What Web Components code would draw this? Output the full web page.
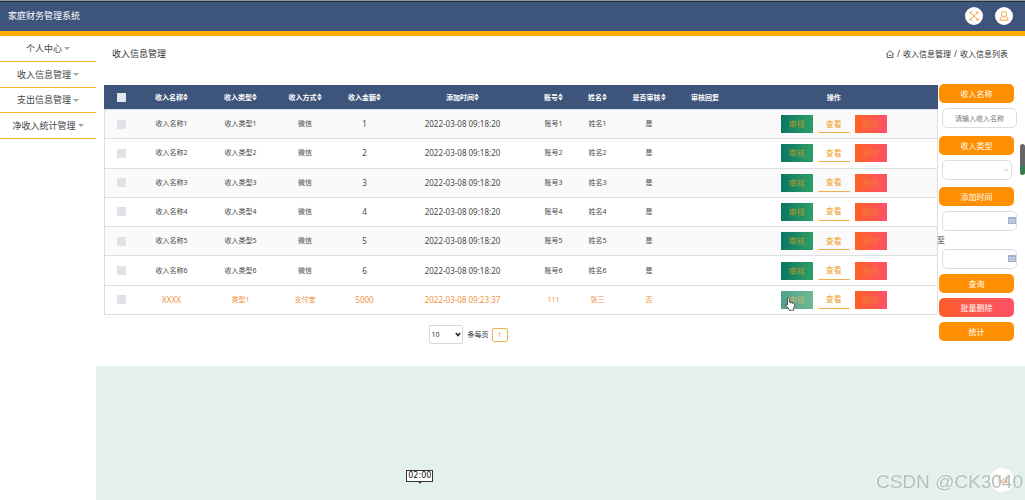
<!DOCTYPE html>
<html lang="zh-CN">
<head>
<meta charset="utf-8">
<title>家庭财务管理系统</title>
<style>
  html, body { margin: 0; }
  body {
    font-family: "Noto Sans", "Noto Sans CJK SC", sans-serif;
    font-size: 8px;
    color: #333;
    background: #fff;
    --blue: #3e557b;
    --orange: #ff8f00;
    --amber: #ffab03;
    --line: #dcdfe2;
  }
</style>
</head>
<body>
<finance-app></finance-app>
<script>
class BaseElement extends HTMLElement {
  render(html) {
    const t = document.createElement('template');
    t.innerHTML = '<style>*{box-sizing:border-box}button,input,select{font-family:inherit;margin:0}</style>' + html;
    const root = this.attachShadow({ mode: 'open' });
    root.appendChild(t.content.cloneNode(true));
    return root;
  }
}

customElements.define('app-header', class extends BaseElement {
  connectedCallback() {
    this.render(`
      <style>
        :host { display: flex; align-items: center; justify-content: space-between; box-sizing: border-box;
          height: 36px; padding: 0 12px 0 8px; background: var(--blue); color: #fff;
          border-top: 1px solid #8d979c; border-bottom: 5px solid var(--amber); box-shadow: inset 0 1px #252f40; }
        h1 { margin: 0; font-size: 9px; line-height: 14px; font-weight: 400; }
        nav { display: flex; gap: 12px; }
        button { display: grid; place-items: center; width: 18px; height: 18px; padding: 0; border: 0; border-radius: 50%; background: #fff; }
        svg { width: 12px; height: 12px; fill: none; stroke: #f5a84c; stroke-width: 1; }
      </style>
      <h1>家庭财务管理系统</h1>
      <nav>
        <button aria-label="全屏"><svg viewBox="0 0 12 12"><path d="M2 4V2h2M8 2h2v2M10 8v2H8M4 10H2V8M2 2l8 8M10 2l-8 8"/></svg></button>
        <button aria-label="用户"><svg viewBox="0 0 12 12"><circle cx="6" cy="4" r="2.6"/><path d="M4.5 6.3C2.6 7 2 8.400 2 10.200h8C10 8.400 9.400 7 7.500 6.300"/></svg></button>
      </nav>`);
  }
});

customElements.define('side-menu', class extends BaseElement {
  connectedCallback() {
    const items = ['个人中心', '收入信息管理', '支出信息管理', '净收入统计管理'];
    this.render(`
      <style>
        :host { display: block; flex: none; width: 96px; background: #fff; }
        ul { display: grid; grid-template-rows: 26px 26px 25px 26px; margin: 0; padding: 0; list-style: none; }
        li { display: grid; border-bottom: 1px solid #f8b632; }
        a { display: flex; align-items: center; justify-content: center; gap: 2px; color: #444; font-size: 9px; line-height: 12px; text-decoration: none; }
        i { border: solid transparent; border-width: 3px 3px 0; border-top-color: #a5a5a5; }
      </style>
      <ul>${items.map(t => `<li><a href="#">${t}<i></i></a></li>`).join('')}</ul>`);
  }
});

customElements.define('page-title', class extends BaseElement {
  connectedCallback() {
    this.render(`
      <style>
        :host { display: flex; align-items: center; justify-content: space-between; height: 35px; padding: 0 17px 0 16px; }
        h2 { margin: 0; font-size: 9px; line-height: 14px; font-weight: 400; }
        nav { display: flex; align-items: center; gap: 3px; line-height: 12px; }
        a { display: flex; color: inherit; text-decoration: none; }
        svg { width: 8px; height: 8px; fill: none; stroke: #333; }
      </style>
      <h2>收入信息管理</h2>
      <nav>
        <a href="#" aria-label="首页"><svg viewBox="0 0 8 8"><path d="M.3 4.200L4 .6 7.700 4.200M1.200 3.500v4h5.600v-4M2.800 5.500h2.400" stroke-width=".8"/></svg></a>
        <span>/</span><a href="#">收入信息管理</a><span>/</span><span>收入信息列表</span>
      </nav>`);
  }
});

customElements.define('row-actions', class extends BaseElement {
  connectedCallback() {
    this.render(`
      <style>
        :host { display: flex; justify-content: center; gap: 5px; position: relative; }
        button { width: 32px; height: 18px; padding: 0; border: 0; font-size: 8px; line-height: 16px; color: #f1a02c; }
        .audit { background: linear-gradient(90deg, #0b7664, #2e9f66); color: #b89a2c; }
        .view { background: none; border-bottom: 1px solid #efae52; }
        .del { background: linear-gradient(90deg, #ff6126, #ff5068); color: #f47c34; }
        :host([hovered]) .audit { opacity: .7; }
        svg { display: none; position: absolute; left: 50%; top: 6px; margin-left: -49px; width: 10px; height: 14px; }
        :host([hovered]) svg { display: block; }
      </style>
      <button class="audit">审核</button><button class="view">查看</button><button class="del">删除</button>
      <svg viewBox="0 0 10 14"><path d="M2.500 8V1.500c0-1.300 1.800-1.300 1.800 0V5l4 .8c.8.2 1.200.7 1.200 1.500 0 2-.3 3-1 4.200V13.300H4V12L.8 8.200C.2 7.300 1.300 6.500 2.500 8zM5.500 6.500V5.300M7.500 6.800V5.700" fill="#fff" stroke="#222" stroke-width=".7"/></svg>`);
  }
});

customElements.define('income-table', class extends BaseElement {
  connectedCallback() {
    const widths = [33, 68, 70, 59, 60, 136, 46, 42, 61, 51, 207];
    const heads = ['收入名称', '收入类型', '收入方式', '收入金额', '添加时间', '账号', '姓名', '是否审核'];
    const rows = [1, 2, 3, 4, 5, 6].map(n => ['收入名称' + n, '收入类型' + n, '微信', n, '2022-03-08 09:18:20', '账号' + n, '姓名' + n, '是', '']);
    rows.push(['XXXX', '类型1', '支付宝', '5000', '2022-03-08 09:23:37', '111', '张三', '否', '']);
    const sort = '<svg viewBox="0 0 5 8"><path d="M0 3.500L2.500.5 5 3.500zM0 4.500L2.500 7.500 5 4.500z"/></svg>';
    this.render(`
      <style>
        :host { display: block; }
        table { width: 100%; height: 230px; table-layout: fixed; border-collapse: collapse; border: 1px solid var(--line); text-align: center; font-size: 7px; line-height: 12px; }
        th, td { padding: 0; white-space: nowrap; }
        th { height: 24px; background: var(--blue); color: #fff; font-weight: 700; }
        thead { border: 1px solid var(--blue); }
        td { border-top: 1px solid var(--line); }
        tbody { color: #484848; }
        tbody tr:nth-child(odd) { background: #fafafa; }
        tbody tr:last-child { background: #fff; color: #f0923c; }
        .num { font-size: 8px; }
        th svg { width: 5px; height: 8px; fill: #fff; vertical-align: -1px; }
        input { appearance: none; display: block; width: 9px; height: 9px; margin: 0 auto; background: #dfe2e6; }
        th input { background: #e4e8ee; }
      </style>
      <table>
        <colgroup>${widths.map(w => `<col style="width:${w}px">`).join('')}</colgroup>
        <thead><tr><th><input type="checkbox" aria-label="全选"></th>${heads.map(h => `<th>${h}${sort}</th>`).join('')}<th>审核回复</th><th>操作</th></tr></thead>
        <tbody>${rows.map((r, i) => `<tr><td><input type="checkbox" aria-label="选择 ${r[0]}"></td>${r.map((c, j) =>
          `<td${j === 3 || j === 4 || c === 'XXXX' ? ' class="num"' : ''}>${c}</td>`).join('')}<td><row-actions${i === 6 ? ' hovered' : ''}></row-actions></td></tr>`).join('')}</tbody>
      </table>`);
  }
});

customElements.define('table-pager', class extends BaseElement {
  connectedCallback() {
    this.render(`
      <style>
        :host { display: flex; justify-content: center; align-items: center; padding: 10px 0 22px; margin-right: 105px; font-size: 7px; line-height: 12px; }
        label { display: flex; align-items: center; gap: 5px; }
        .box { position: relative; }
        select { display: block; appearance: none; width: 34px; height: 19px; padding: 0 2px; border: 1px solid #d5d8dc; border-radius: 2px; background: #fff; color: #333; font-size: 7px; }
        svg { position: absolute; right: 2px; top: 7px; width: 6px; height: 5px; fill: none; stroke: #222; stroke-width: 1.5; pointer-events: none; }
        button { width: 16px; height: 14px; margin-left: 3px; padding: 0; border: 1px solid #eab253; border-radius: 2px; background: #fff; color: #eda044; font-size: 7px; line-height: 12px; }
      </style>
      <label><span class="box"><select><option>10</option></select><svg viewBox="0 0 6 5"><path d="M.8 1L3 3.500 5.200 1"/></svg></span>条每页</label><button>1</button>`);
  }
});

customElements.define('search-panel', class extends BaseElement {
  connectedCallback() {
    const cal = '<svg class="cal" viewBox="0 0 8 7"><path d="M0 0h8v7H0z" fill="#9fb1cc"/><path d="M1 2h6v4H1z" fill="#cbd7e8"/><path d="M3 2v4M5 2v4M1 4h6" stroke="#93a9ca" stroke-width=".5"/></svg>';
    this.render(`
      <style>
        :host { display: flex; flex-direction: column; flex: none; width: 88px; padding-left: 2px; box-sizing: border-box; }
        button, .tag { display: block; flex: none; width: 75px; height: 19px; padding: 0; border: 0; border-radius: 5px; background: var(--orange); color: #fff; font-size: 8px; line-height: 19px; text-align: center; }
        .field { position: relative; width: 75px; height: 20px; margin: 5px 0 8px 3px; }
        .field.short { width: 70px; margin-bottom: 7px; }
        input, select { display: block; width: 100%; height: 100%; padding: 0; border: 1px solid #d9dce1; border-radius: 5px; background: #fff; font-size: 7px; text-align: center; appearance: none; }
        input::placeholder { color: #777; }
        svg { position: absolute; pointer-events: none; }
        .cal { right: 1px; top: 6px; width: 8px; height: 7px; }
        .arrow { right: 3px; top: 8px; width: 5px; height: 4px; fill: none; stroke: #aaa; stroke-width: .8; }
        .field.from { margin-bottom: 3px; }
        .to { margin-left: -2px; line-height: 12px; }
        .field.until { margin: 3px 0 5px 3px; }
        .actions { display: grid; gap: 5px; }
        .danger { background: linear-gradient(90deg, #ff5d2c, #ff5068); }
      </style>
      <label class="tag" for="name">收入名称</label>
      <div class="field"><input id="name" placeholder="请输入收入名称"></div>
      <label class="tag" for="type">收入类型</label>
      <div class="field short"><select id="type"><option></option></select><svg class="arrow" viewBox="0 0 5 4"><path d="M.5 .8L2.500 3 4.500 .8"/></svg></div>
      <label class="tag" for="from">添加时间</label>
      <div class="field from"><input id="from">${cal}</div>
      <label class="to" for="until">至</label>
      <div class="field until"><input id="until">${cal}</div>
      <div class="actions"><button>查询</button><button class="danger">批量删除</button><button>统计</button></div>`);
  }
});

customElements.define('time-tip', class extends BaseElement {
  connectedCallback() {
    this.render(`
      <style>
        :host { position: fixed; left: 41%; bottom: 18px; margin-left: -14px; padding: 0 1px; border: 1px solid #333; background: #fff; color: #111; font: 8px/10px "DejaVu Sans", sans-serif; }
        i { position: absolute; left: 50%; top: 100%; margin-left: -2px; border: solid transparent; border-width: 3px 2px 0; border-top-color: #333; }
      </style><slot></slot><i></i>`);
  }
});

customElements.define('water-mark', class extends BaseElement {
  connectedCallback() {
    this.render(`
      <style>
        :host { position: fixed; right: 2px; bottom: 7px; font: 19px/22px "Liberation Sans", sans-serif; color: #b7bfbd; text-shadow: -1px -1px #f3f8f6; pointer-events: none; white-space: nowrap; }
      </style><slot></slot>`);
  }
});

customElements.define('float-button', class extends BaseElement {
  connectedCallback() {
    this.render(`
      <style>
        :host { position: fixed; right: 11px; bottom: 8px; }
        button { display: grid; place-items: center; width: 24px; height: 24px; padding: 0; border: 0; border-radius: 50%; background: #fff; }
        svg { width: 14px; height: 12px; fill: none; stroke: #f09058; stroke-width: 1.2; }
      </style>
      <button aria-label="返回顶部"><svg viewBox="0 0 14 12"><path d="M1 2h5M3.500 2v8M12 10V2L6 8h8"/></svg></button>`);
  }
});

customElements.define('scroll-thumb', class extends BaseElement {
  connectedCallback() {
    this.render(`
      <style>
        :host { position: fixed; right: 0; top: 144px; width: 5px; height: 31px; border-radius: 3px; background: linear-gradient(#666 72%, #397d4c 72%); }
      </style>`);
  }
});

customElements.define('finance-app', class extends BaseElement {
  connectedCallback() {
    this.render(`
      <style>
        :host { display: flex; flex-direction: column; min-height: 100vh; }
        .body { display: flex; flex: 1; }
        main { flex: 1; min-width: 0; background: #e4f0ec; }
        .panel { background: #fff; }
        .content { display: flex; padding: 13px 0 0 8px; }
        .list { flex: 1; min-width: 0; padding-top: 1px; }
        search-panel { margin-bottom: 24px; }
      </style>
      <app-header></app-header>
      <div class="body">
        <side-menu></side-menu>
        <main><div class="panel">
          <page-title></page-title>
          <div class="content">
            <div class="list"><income-table></income-table><table-pager></table-pager></div>
            <search-panel></search-panel>
          </div>
        </div></main>
      </div>
      <scroll-thumb></scroll-thumb>
      <time-tip>02:00</time-tip>
      <float-button></float-button>
      <water-mark>CSDN @CK3040</water-mark>`);
  }
});
</script>
</body>
</html>
